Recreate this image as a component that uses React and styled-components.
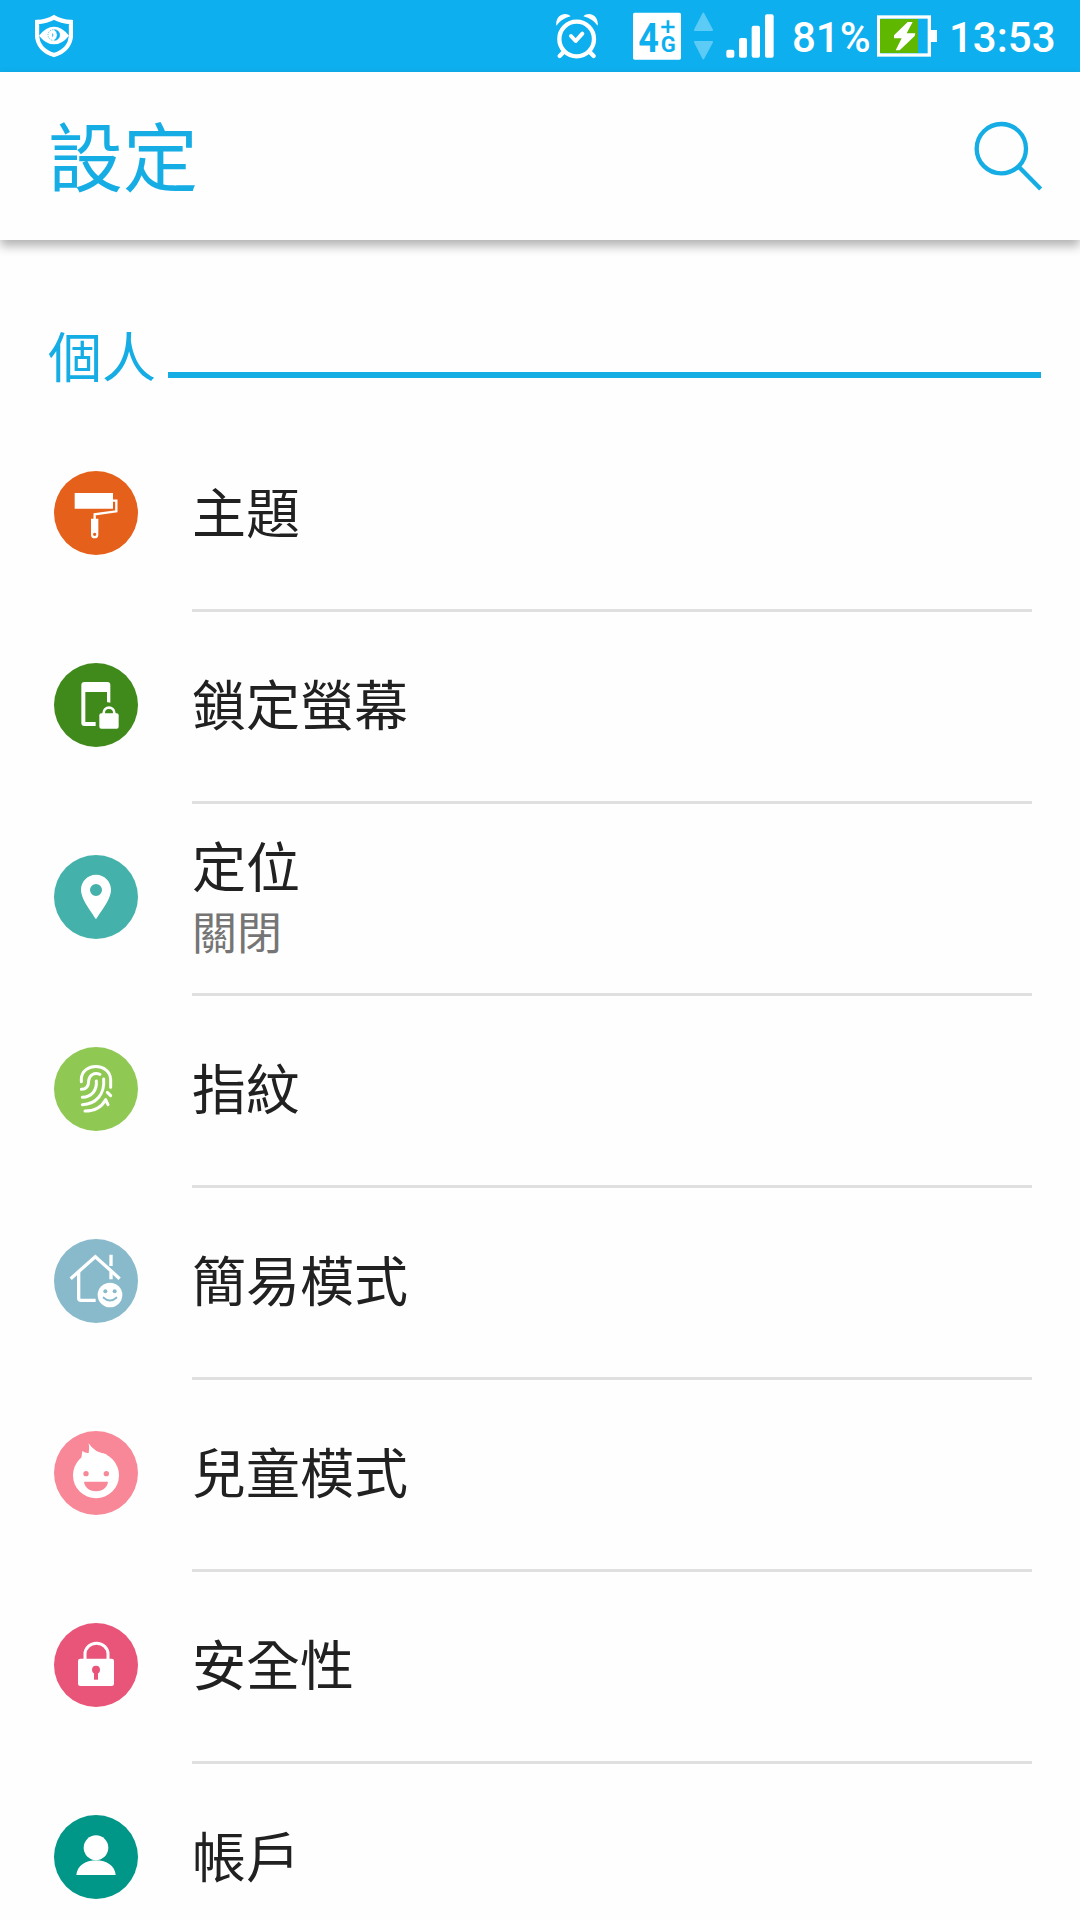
import React from "react"
import styled, { createGlobalStyle } from "styled-components"

const theme = {
  colors: {
    bar: "#0eafee",
    accent: "#16ade5",
    background: "#fefefe",
    text: "#212121",
    subText: "#757575",
    divider: "#e0e0e0",
    battery: "#5fb700",
  },
  font: `Roboto, "Noto Sans CJK TC", sans-serif`,
  cjk: `"Noto Sans CJK TC", sans-serif`,
}

const GlobalStyle = createGlobalStyle`
  body {
    background-color: ${theme.colors.background};
    margin: 0;
    overflow: hidden;
  }
`

const Screen = styled.div`
  background-color: ${theme.colors.background};
  display: flex;
  flex-direction: column;
  font-family: ${theme.cjk};
  height: 1920px;
  overflow: hidden;
  width: 1080px;
`

const StatusBar = styled.div`
  align-items: center;
  background-color: ${theme.colors.bar};
  box-sizing: border-box;
  color: white;
  display: flex;
  flex: none;
  font-family: ${theme.font};
  height: 72px;
  padding: 0 24px 0 35px;
`

const StatusIcon = styled.svg`
  display: block;
  flex: none;
  height: 72px;
  margin-left: ${props => props.$gap || 0}px;
  width: ${props => props.$width}px;
`

const StatusText = styled.span`
  font-size: 42px;
  font-weight: 500;
  line-height: 68px;
  margin-left: ${props => props.$gap}px;
  padding-top: 4px;
  white-space: nowrap;
  width: ${props => props.$width}px;
`

const Spacer = styled.div`
  flex: 1;
`

const Header = styled.header`
  align-items: center;
  background-color: ${theme.colors.background};
  box-shadow: 0 6px 10px rgba(0, 0, 0, 0.3);
  box-sizing: border-box;
  display: flex;
  flex: none;
  height: 168px;
  justify-content: space-between;
  padding: 0 37px 0 48px;
`

const Title = styled.h1`
  color: ${theme.colors.accent};
  font-size: 75px;
  font-weight: 400;
  line-height: 84px;
  margin: 0 0 5px;
`

const SearchIcon = styled.svg`
  display: block;
  height: 70px;
  margin-top: 0;
  width: 69px;
`

const Section = styled.section`
  display: flex;
  flex-direction: column;
  padding-top: 78px;
`

const SectionHeader = styled.div`
  align-items: flex-end;
  display: flex;
  height: 60px;
  padding: 0 39px 42px 48px;
`

const SectionTitle = styled.h2`
  color: ${theme.colors.accent};
  font-size: 54px;
  font-weight: 400;
  line-height: 60px;
  margin: 0 0 -7px;
  width: 120px;
`

const SectionLine = styled.div`
  background-color: ${theme.colors.accent};
  flex: 1;
  height: 6px;
`

const Row = styled.div`
  display: flex;
  flex: none;
  height: 192px;
  padding: 0 48px 0 54px;
`

const IconCircle = styled.div`
  background-color: ${props => props.$color};
  border-radius: 50%;
  flex: none;
  height: 84px;
  margin: 51px 54px 0 0;
  width: 84px;
`

const Glyph = styled.svg`
  display: block;
  height: 84px;
  width: 84px;
`

const RowBody = styled.div`
  border-bottom: 3px solid ${theme.colors.divider};
  box-sizing: border-box;
  display: flex;
  flex: 1;
  flex-direction: column;
  height: 192px;
  justify-content: center;
  padding-bottom: 8px;
`

const RowTitle = styled.div`
  color: ${theme.colors.text};
  font-size: 54px;
  line-height: 70px;
`

const RowSummary = styled.div`
  color: ${theme.colors.subText};
  font-size: 45px;
  line-height: 58px;
  padding-top: 2px;
`

const line = {
  fill: "none",
  stroke: "white",
  strokeLinecap: "round",
  strokeLinejoin: "round",
}

const items = [
  {
    title: "主題",
    color: "#e5601b",
    glyph: (
      <>
        <path d="M62 66h115v47H62z" fill="white" />
        <path
          d="M176 89h11v32l-65 9v16"
          fill="none"
          stroke="white"
          strokeWidth="7"
        />
        <path
          d="M111 143h22v48a11 11 0 0 1-22 0z M122 185a5 5 0 1 0 0 10a5 5 0 1 0 0-10z"
          fill="white"
          fillRule="evenodd"
        />
      </>
    ),
  },
  {
    title: "鎖定螢幕",
    color: "#3f8a1b",
    glyph: (
      <>
        <path
          d="M91 57h69q9 0 9 9v53q-5-2-10-1V87H94v90h31v12H91q-9 0-9-9V66q0-9 9-9z"
          fill="white"
        />
        <rect x="136" y="151" width="58" height="46" rx="6" fill="white" />
        <path
          d="M149 154v-4a16 16 0 0 1 32 0v4"
          fill="none"
          stroke="white"
          strokeWidth="8"
        />
      </>
    ),
  },
  {
    title: "定位",
    summary: "關閉",
    color: "#44b2ab",
    glyph: (
      <path
        d="M126 59c-25 0-45 20-45 45c0 31 36 72 45 89c9-17 45-58 45-89c0-25-20-45-45-45z M126 87a18 18 0 1 1 0 36a18 18 0 1 1 0-36z"
        fill="white"
        fillRule="evenodd"
      />
    ),
  },
  {
    title: "指紋",
    color: "#90c854",
    glyph: (
      <g {...line} strokeWidth="9" transform="translate(-42 -51)">
        <path d="M124 155v-8c2-50 86-50 88 2v23" />
        <path d="M180 133c-17-6-32 1-34 19c0 17-8 26-22 26" />
        <path d="M169 153c2 28-13 47-42 49" />
        <path d="M191 147c4 45-22 75-64 77" />
        <path d="M135 243c30 0 51-14 62-34l7 15" />
        <path d="M202 187l10 10" />
      </g>
    ),
  },
  {
    title: "簡易模式",
    color: "#88bacb",
    glyph: (
      <g transform="translate(-42 -57)">
        <path
          d="M92 176l74-66l73 66"
          fill="none"
          stroke="white"
          strokeWidth="10"
        />
        <path
          d="M116 156v78q0 7 7 7h44M213 154v24M213 104v34"
          fill="none"
          stroke="white"
          strokeWidth="10"
        />
        <circle cx="210" cy="225" r="37" fill="white" />
        <circle cx="196" cy="214" r="6" fill="#88bacb" />
        <circle cx="224" cy="214" r="6" fill="#88bacb" />
        <path
          d="M191 233q19 17 38 0"
          {...line}
          stroke="#88bacb"
          strokeWidth="6"
        />
      </g>
    ),
  },
  {
    title: "兒童模式",
    color: "#f88897",
    glyph: (
      <g transform="translate(-42 -63)">
        <circle cx="168" cy="196" r="69" fill="white" />
        <path
          d="M124 145l3-22q9 7 19 6q3-14 0-29q16 27 54 33l-20 32z"
          fill="white"
        />
        <circle cx="138" cy="191" r="8" fill="#f88897" />
        <circle cx="199" cy="191" r="8" fill="#f88897" />
        <path d="M132 215h72c-4 38-68 38-72 0z" fill="#f88897" />
      </g>
    ),
  },
  {
    title: "安全性",
    color: "#e95479",
    glyph: (
      <g transform="translate(-42 -69)">
        <rect x="114" y="176" width="108" height="82" rx="7" fill="white" />
        <path
          d="M135 178v-16a34 32 0 0 1 69 0v16"
          fill="none"
          stroke="white"
          strokeWidth="9"
        />
        <circle cx="168" cy="209" r="12" fill="#e95479" />
        <path d="M162 212h12v27h-12z" fill="#e95479" />
      </g>
    ),
  },
  {
    title: "帳戶",
    color: "#009688",
    glyph: (
      <g fill="white" transform="translate(-42 -75)">
        <circle cx="168" cy="173" r="37" />
        <path d="M109 255c2-27 27-44 59-44s57 17 59 44z" />
      </g>
    ),
  },
]

const Shield = () => (
  <StatusIcon $width={38} viewBox="105 0 114 216">
    <path
      d="M162 52q-22 13-51 14v36c0 32 20 54 51 63c31-9 51-31 51-63V66q-29-1-51-14z"
      fill="none"
      stroke="white"
      strokeWidth="13"
    />
    <path
      d="M117 107q21-27 45-27t45 27q-21 26-45 26t-45-26z"
      fill="white"
    />
    <path
      d="M163 89a16 16 0 0 1 0 32q9-6 9-16t-9-16z"
      fill={theme.colors.bar}
      stroke={theme.colors.bar}
      strokeWidth="2"
    />
    <path
      d="M160 89a16 16 0 0 0 0 32"
      fill="none"
      stroke={theme.colors.bar}
      strokeDasharray="4 3"
      strokeWidth="2"
    />
    <path d="M157 99q6 6 0 13z" fill={theme.colors.bar} />
  </StatusIcon>
)

const Alarm = () => (
  <StatusIcon $width={42} viewBox="48 0 126 216">
    <circle
      cx="110"
      cy="117"
      r="52"
      fill="none"
      stroke="white"
      strokeWidth="13"
    />
    <path
      d="M49 77c-4-33 28-44 43-28q-29 8-43 28zM173 77c4-33-28-44-43-28q29 8 43 28z"
      fill="white"
    />
    <path d="M70 157l-11 11M150 157l11 11" {...line} strokeWidth="13" />
    <path d="M93 108l14 15l20-22" {...line} strokeWidth="12" />
  </StatusIcon>
)

const Network = () => (
  <StatusIcon $gap={35} $width={48} viewBox="279 0 144 216">
    <rect x="279" y="38" width="144" height="141" rx="5" fill="white" />
    <g fill={theme.colors.bar} fontFamily="Roboto" fontWeight="700">
      <text
        x="295"
        y="156"
        fontSize="124"
        textLength="62"
        lengthAdjust="spacingAndGlyphs"
      >
        4
      </text>
      <text x="362" y="155" fontSize="66">
        G
      </text>
    </g>
    <path
      d="M364 81h40M384 61v38"
      stroke={theme.colors.bar}
      strokeWidth="8"
    />
  </StatusIcon>
)

const DataArrows = () => (
  <StatusIcon $gap={13} $width={19} viewBox="462 0 57 216">
    <path
      d="M490 41l26 49h-51zM490 175l26-49h-51z"
      fill="#5ccbf5"
      stroke="#5ccbf5"
      strokeLinejoin="round"
      strokeWidth="6"
    />
  </StatusIcon>
)

const Signal = () => (
  <StatusIcon $gap={13} $width={48} viewBox="558 0 144 216">
    <g fill="white">
      <rect x="559" y="149" width="24" height="24" rx="6" />
      <rect x="597" y="114" width="24" height="59" rx="6" />
      <rect x="635" y="77" width="25" height="96" rx="6" />
      <rect x="675" y="43" width="26" height="130" rx="6" />
    </g>
  </StatusIcon>
)

const Battery = () => (
  <StatusIcon $width={60} viewBox="291 0 180 216">
    <path d="M450 90h21v36h-21z" fill="white" />
    <rect
      x="296"
      y="51"
      width="152"
      height="114"
      fill={theme.colors.bar}
      stroke="white"
      strokeWidth="10"
    />
    <path d="M300 57h114v102H300z" fill={theme.colors.battery} />
    <path d="M383 66h15l-18 34h26l-2 8l-45 43h-12l18-36h-23v-9z" fill="white" />
  </StatusIcon>
)

const App = () => (
  <>
    <GlobalStyle />
    <Screen>
      <StatusBar>
        <Shield />
        <Spacer />
        <Alarm />
        <Network />
        <DataArrows />
        <Signal />
        <StatusText $gap={18} $width={85}>
          81%
        </StatusText>
        <Battery />
        <StatusText $gap={12} $width={107}>
          13:53
        </StatusText>
      </StatusBar>
      <Header>
        <Title>設定</Title>
        <SearchIcon viewBox="581 362 207 210">
          <g fill="none" stroke={theme.colors.accent} strokeWidth="13">
            <circle cx="663" cy="445" r="74" />
            <path d="M716 500l65 66" />
          </g>
        </SearchIcon>
      </Header>
      <Section>
        <SectionHeader>
          <SectionTitle>個人</SectionTitle>
          <SectionLine />
        </SectionHeader>
        {items.map(item => (
          <Row key={item.title}>
            <IconCircle $color={item.color}>
              <Glyph viewBox="0 0 252 252">{item.glyph}</Glyph>
            </IconCircle>
            <RowBody>
              <RowTitle>{item.title}</RowTitle>
              {item.summary && <RowSummary>{item.summary}</RowSummary>}
            </RowBody>
          </Row>
        ))}
      </Section>
    </Screen>
  </>
)

export default App
